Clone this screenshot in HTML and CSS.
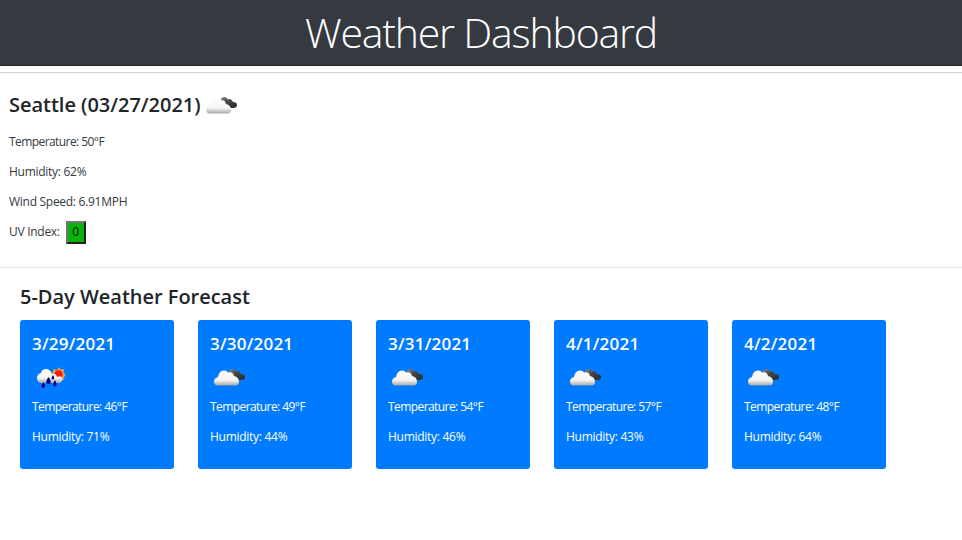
FILE: index.html
```html
<!DOCTYPE html>
<html lang="en">
<head>
<meta charset="utf-8">
<title>Weather Dashboard</title>
<link rel="stylesheet" href="styles.css">
</head>
<body>
<svg class="defs" width="0" height="0" aria-hidden="true">
  <defs>
    <linearGradient id="white" x1="0" y1="0" x2="0" y2="1"><stop offset="0" stop-color="#fff"/><stop offset=".65" stop-color="#f5f5f5"/><stop offset="1" stop-color="#a5a5a5"/></linearGradient>
    <linearGradient id="dark" x1="0" y1="0" x2="1" y2="1"><stop offset="0" stop-color="#888"/><stop offset=".4" stop-color="#484848"/><stop offset="1" stop-color="#282828"/></linearGradient>
    <symbol id="clouds" viewBox="0 0 44 30">
      <path fill="url(#dark)" d="M21 10Q21 7 24.500 7Q27 7 28 9.500Q31 8 33 12Q37 12 37 15Q37 18 33 18H29Q22 15 21 10Z"/>
      <path fill="url(#white)" d="M10 23.500Q6 23.500 6 19.500Q6 16 10 15Q11 8.500 16 8.500Q19 8.500 20 10.500Q25 9 26 14Q31 15 31 20Q31 23.500 27 23.500Z"/>
    </symbol>
    <symbol id="rain" viewBox="0 0 44 30">
      <path fill="#f0a043" d="M29 5L30.500 7.500L34 7L33.500 10.500L35.500 13L33.500 16L34 18H24L22 11L24 7L27 8Z"/>
      <circle cx="28.500" cy="12.500" r="4.200" fill="#f51b10"/>
      <path fill="url(#white)" d="M11 21Q7 20 7 16Q7 12 11 11Q12 7 16 7Q20 7 22 12Q26 11 27 15Q32 13 32 17Q33 20 29 21Z"/>
      <path fill="#00008f" d="M18.500 15Q21.500 19 20.500 21Q18.500 23 16.500 21Q15.500 19 18.500 15ZM13.500 20Q16 24 15 25Q13 27 11.500 25Q11 23 13.500 20ZM25 18Q27 22 26.500 23.500Q25 25.500 23 23.500Q23 21 25 18ZM23 13Q25 15.500 24 17Q22.500 18 21.500 16.500Q21.500 15 23 13Z"/>
    </symbol>
  </defs>
</svg>
<header class="banner"><h1>Weather Dashboard</h1></header>
<main>
  <section class="current">
    <h2><span class="city">Seattle (03/27/2021)</span><svg class="icon"><use href="#clouds"/></svg></h2>
    <p class="temp">Temperature: 50°F</p>
    <p>Humidity: 62%</p>
    <p>Wind Speed: 6.91MPH</p>
    <p>UV Index: <button class="uv">0</button></p>
  </section>
  <section class="forecast">
    <h2>5-Day Weather Forecast</h2>
    <div class="cards">
      <article class="card"><h3>3/29/2021</h3><svg class="icon"><use href="#rain"/></svg><p class="temp">Temperature: 46°F</p><p>Humidity: 71%</p></article>
      <article class="card"><h3>3/30/2021</h3><svg class="icon"><use href="#clouds"/></svg><p class="temp">Temperature: 49°F</p><p>Humidity: 44%</p></article>
      <article class="card"><h3>3/31/2021</h3><svg class="icon"><use href="#clouds"/></svg><p class="temp">Temperature: 54°F</p><p>Humidity: 46%</p></article>
      <article class="card"><h3>4/1/2021</h3><svg class="icon"><use href="#clouds"/></svg><p class="temp">Temperature: 57°F</p><p>Humidity: 43%</p></article>
      <article class="card"><h3>4/2/2021</h3><svg class="icon"><use href="#clouds"/></svg><p class="temp">Temperature: 48°F</p><p>Humidity: 64%</p></article>
    </div>
  </section>
</main>
</body>
</html>
```
FILE: styles.css
```css
* { box-sizing: border-box; }
body {
  margin: 0;
  background: #fff;
  color: #212529;
  font: 12px/18px "Open Sans", "Noto Sans", sans-serif;
  letter-spacing: -0.28px;
}
h1, h2, h3, p { margin: 0; }
.defs { display: block; }
.banner {
  height: 66px;
  background: #343a40;
  border-bottom: 1px solid #24282c;
  color: #fff;
  text-align: center;
}
h1 { font-size: 41px; line-height: 64px; font-weight: 300; letter-spacing: -1.2px; }
main { margin-top: 6px; border-top: 1px solid #d0d0d0; }
h2 { font-size: 20px; line-height: 24px; font-weight: 600; letter-spacing: -0.02px; white-space: nowrap; }
.current {
  height: 195px;
  padding: 20px 9px 0;
  border-bottom: 1px solid #e5e5e5;
}
.current h2 { display: flex; height: 24px; margin-bottom: 16px; }
.city { width: 191px; }
.current p { height: 18px; margin-bottom: 12px; display: flex; align-items: center; color: #343a40; }
p.temp { letter-spacing: -0.57px; }
.icon { display: block; width: 44px; height: 30px; flex: none; }
.current .icon { margin-top: -3px; }
.uv {
  width: 20px;
  height: 23px;
  margin-left: 6px;
  padding: 0;
  background: #08b30c;
  border: 2px outset #767676;
  color: #111;
  font: inherit;
}
.forecast { padding: 17px 20px 0; }
.cards { display: flex; gap: 24px; margin-top: 11px; }
.card {
  width: 154px;
  height: 149px;
  padding: 12px;
  border-radius: 3px;
  background: #007bff;
  color: #fff;
}
h3 { font-size: 17px; line-height: 24px; font-weight: 600; letter-spacing: 0.22px; }
.card .icon { margin: 6px 0 6px -2px; }
.card p { margin-bottom: 12px; white-space: nowrap; }
```
